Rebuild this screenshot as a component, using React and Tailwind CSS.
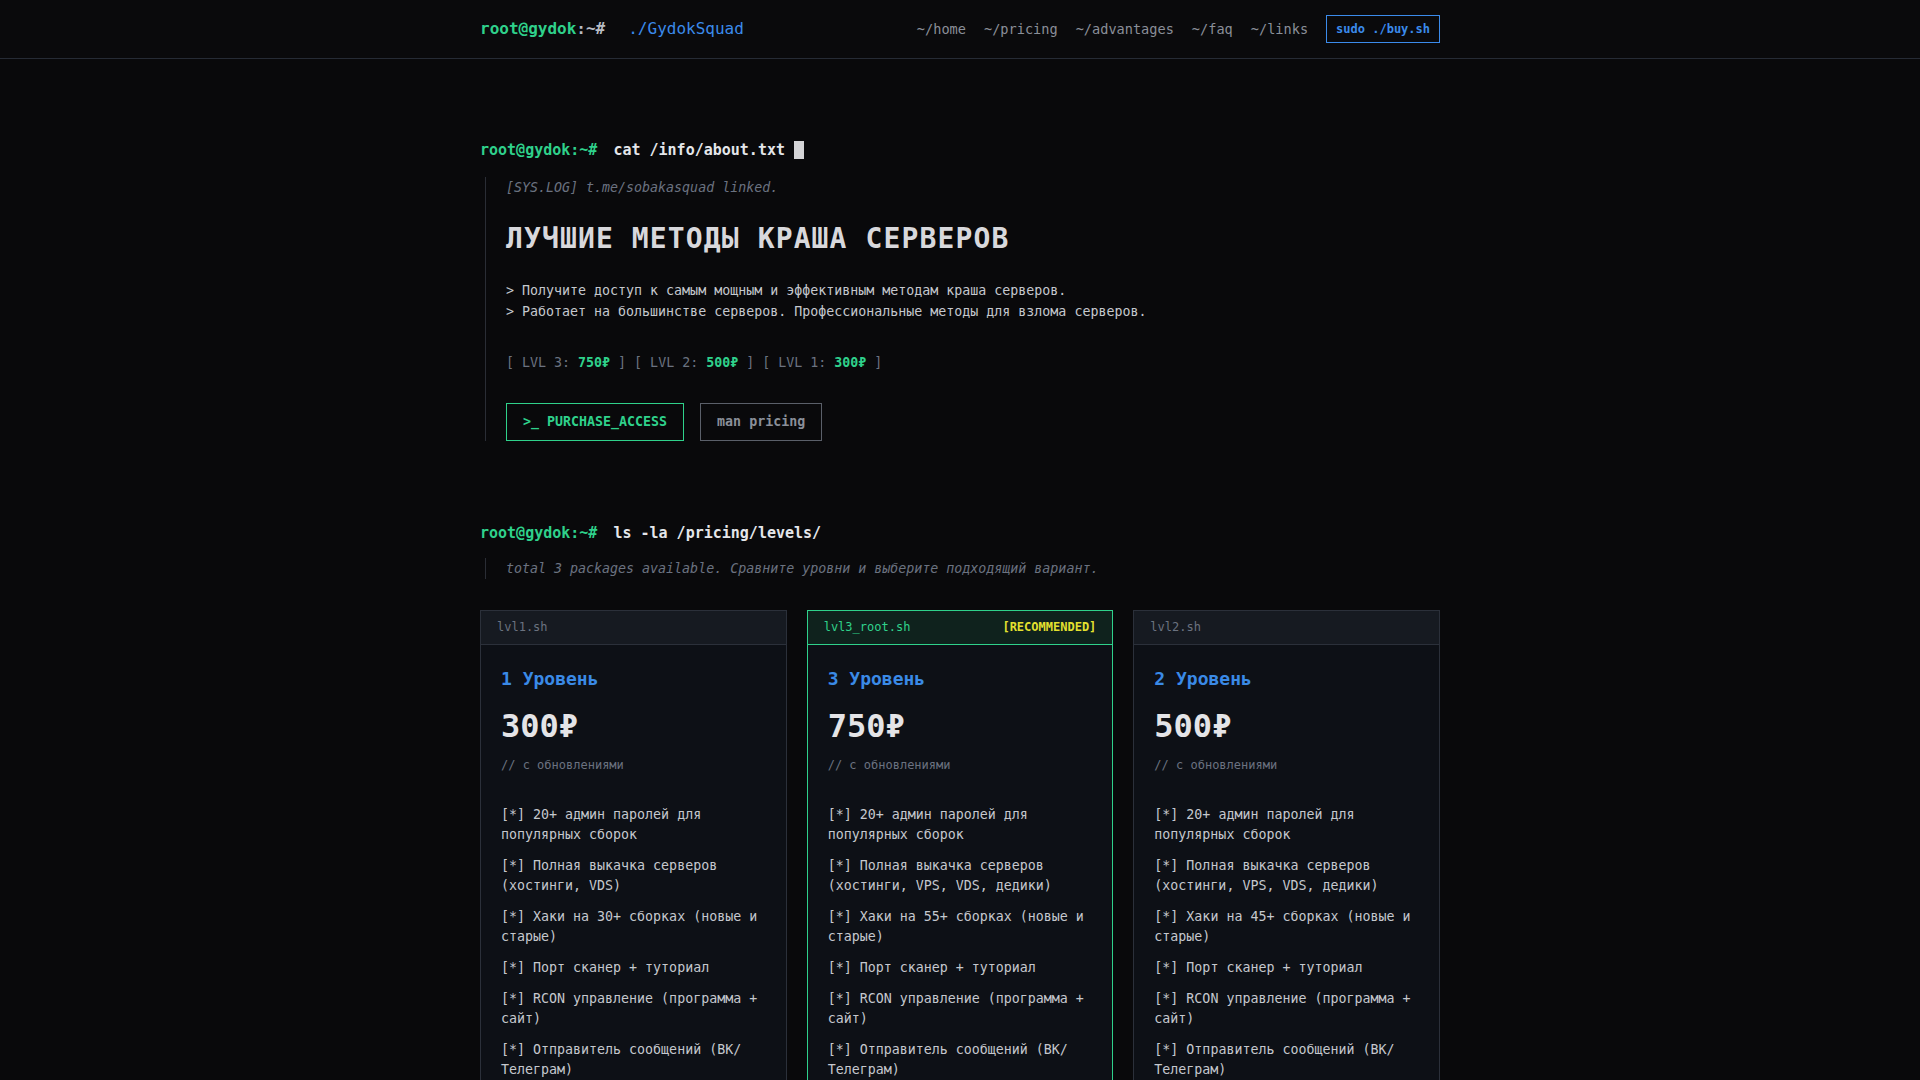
const mono = { fontFamily: '"DejaVu Sans Mono", "Liberation Mono", monospace' };

const navLinks = ["~/home", "~/pricing", "~/advantages", "~/faq", "~/links"];

const plans = [
  {
    file: "lvl1.sh",
    title: "1 Уровень",
    price: "300₽",
    features: [
      "20+ админ паролей для популярных сборок",
      "Полная выкачка серверов (хостинги, VDS)",
      "Хаки на 30+ сборках (новые и старые)",
      "Порт сканер + туториал",
      "RCON управление (программа + сайт)",
      "Отправитель сообщений (ВК/Телеграм)",
    ],
  },
  {
    file: "lvl3_root.sh",
    title: "3 Уровень",
    price: "750₽",
    recommended: true,
    features: [
      "20+ админ паролей для популярных сборок",
      "Полная выкачка серверов (хостинги, VPS, VDS, дедики)",
      "Хаки на 55+ сборках (новые и старые)",
      "Порт сканер + туториал",
      "RCON управление (программа + сайт)",
      "Отправитель сообщений (ВК/Телеграм)",
    ],
  },
  {
    file: "lvl2.sh",
    title: "2 Уровень",
    price: "500₽",
    features: [
      "20+ админ паролей для популярных сборок",
      "Полная выкачка серверов (хостинги, VPS, VDS, дедики)",
      "Хаки на 45+ сборках (новые и старые)",
      "Порт сканер + туториал",
      "RCON управление (программа + сайт)",
      "Отправитель сообщений (ВК/Телеграм)",
    ],
  },
];

function Prompt({ cmd, cursor }) {
  return (
    <div className="flex items-center text-[15px] leading-[22px]">
      <span className="font-bold text-[#2fd18b]">root@gydok:~#</span>
      <span className="ml-4 font-semibold text-[#e4e6ea]">{cmd}</span>
      {cursor && <span className="ml-[9px] inline-block h-[18px] w-[10px] bg-[#d4d4d6]" />}
    </div>
  );
}

function PlanCard({ plan }) {
  const rec = plan.recommended;
  return (
    <div className={`border bg-[#0d1016] ${rec ? "border-[#2fd18b]" : "border-[#2b303a]"}`}>
      <div
        className={`flex items-center justify-between border-b px-4 py-2 text-[12px] leading-[17px] ${
          rec ? "border-[#2fd18b] bg-[#0f221d] text-[#2fd18b]" : "border-[#2b303a] bg-[#161a21] text-[#6b7280]"
        }`}
      >
        <span>{plan.file}</span>
        {rec && <span className="font-bold text-[#e3e02f]">[RECOMMENDED]</span>}
      </div>
      <div className="px-5 pt-5 pb-6">
        <h3 className="text-[18px] leading-[28.8px] font-bold text-[#3a8ae6]">{plan.title}</h3>
        <p className="mt-[14px] text-[32px] leading-[38.4px] font-bold text-[#e4e4e7]">{plan.price}</p>
        <p className="mt-[10px] text-[12px] leading-[18px] text-[#6b7280]">// с обновлениями</p>
        <ul className="mt-[31px] flex flex-col gap-[11px] text-[13.3px] leading-5 text-[#c5c8ce]">
          {plan.features.map((f) => (
            <li key={f}>[*] {f}</li>
          ))}
        </ul>
      </div>
    </div>
  );
}

export default function App() {
  return (
    <div className="min-h-screen bg-[#09090b] text-[#c5c8ce]" style={mono}>
      <header className="h-[59px] border-b border-[#262b35] bg-[#0a0a0c]">
        <div className="mx-auto flex h-full max-w-[960px] items-center justify-between">
          <div className="text-[16px]">
            <span className="font-bold text-[#2fd18b]">root@gydok</span>
            <span className="font-bold text-[#b8bcc4]">:~#</span>
            <span className="ml-[23px] text-[#3b8beb]">./GydokSquad</span>
          </div>
          <nav className="flex items-center gap-[18px] text-[13.6px] text-[#8a8f99]">
            {navLinks.map((l) => (
              <a key={l} href="#" className="hover:text-[#2fd18b]">{l}</a>
            ))}
            <a href="#" className="border border-[#3b8beb] px-[9px] py-[5px] text-[12px] leading-4 font-bold text-[#3b8beb]">
              sudo ./buy.sh
            </a>
          </nav>
        </div>
      </header>

      <main className="mx-auto max-w-[960px] pt-20 pb-24">
        <section>
          <Prompt cmd="cat /info/about.txt" cursor />
          <div className="mt-4 ml-[5px] border-l border-[#2a2d35] pl-5">
            <p className="text-[13.3px] leading-[21px] text-[#6b7280] italic">[SYS.LOG] t.me/sobakasquad linked.</p>
            <h1 className="mt-6 text-[28px] leading-[33.6px] font-bold tracking-[0.04em] text-[#d8d8dc]">
              ЛУЧШИЕ МЕТОДЫ КРАША СЕРВЕРОВ
            </h1>
            <div className="mt-6 text-[13.3px] leading-[21px] text-[#c5c8ce]">
              <p>&gt; Получите доступ к самым мощным и эффективным методам краша серверов.</p>
              <p>&gt; Работает на большинстве серверов. Профессиональные методы для взлома серверов.</p>
            </div>
            <p className="mt-[30px] text-[13.3px] leading-[21px] whitespace-pre text-[#6b7280]">
              [ LVL 3: <span className="font-bold text-[#2fd18b]">750₽</span> ] [ LVL 2:{" "}
              <span className="font-bold text-[#2fd18b]">500₽</span> ] [ LVL 1:{" "}
              <span className="font-bold text-[#2fd18b]">300₽</span> ]
            </p>
            <div className="mt-[30px] flex gap-4">
              <button className="border border-[#2fd18b] px-4 py-2 text-[13.3px] leading-5 font-bold text-[#2fd18b]">
                &gt;_ PURCHASE_ACCESS
              </button>
              <button className="border border-[#5a5f69] px-4 py-2 text-[13.3px] leading-5 font-bold text-[#8a8f99]">
                man pricing
              </button>
            </div>
          </div>
        </section>

        <section className="mt-[81px]">
          <Prompt cmd="ls -la /pricing/levels/" />
          <div className="mt-[14px] ml-[5px] border-l border-[#2a2d35] pl-5">
            <p className="text-[13.3px] leading-[21px] text-[#6b7280] italic">
              total 3 packages available. Сравните уровни и выберите подходящий вариант.
            </p>
          </div>
          <div className="mt-[31px] grid grid-cols-3 gap-5">
            {plans.map((p) => (
              <PlanCard key={p.file} plan={p} />
            ))}
          </div>
        </section>
      </main>
    </div>
  );
}
